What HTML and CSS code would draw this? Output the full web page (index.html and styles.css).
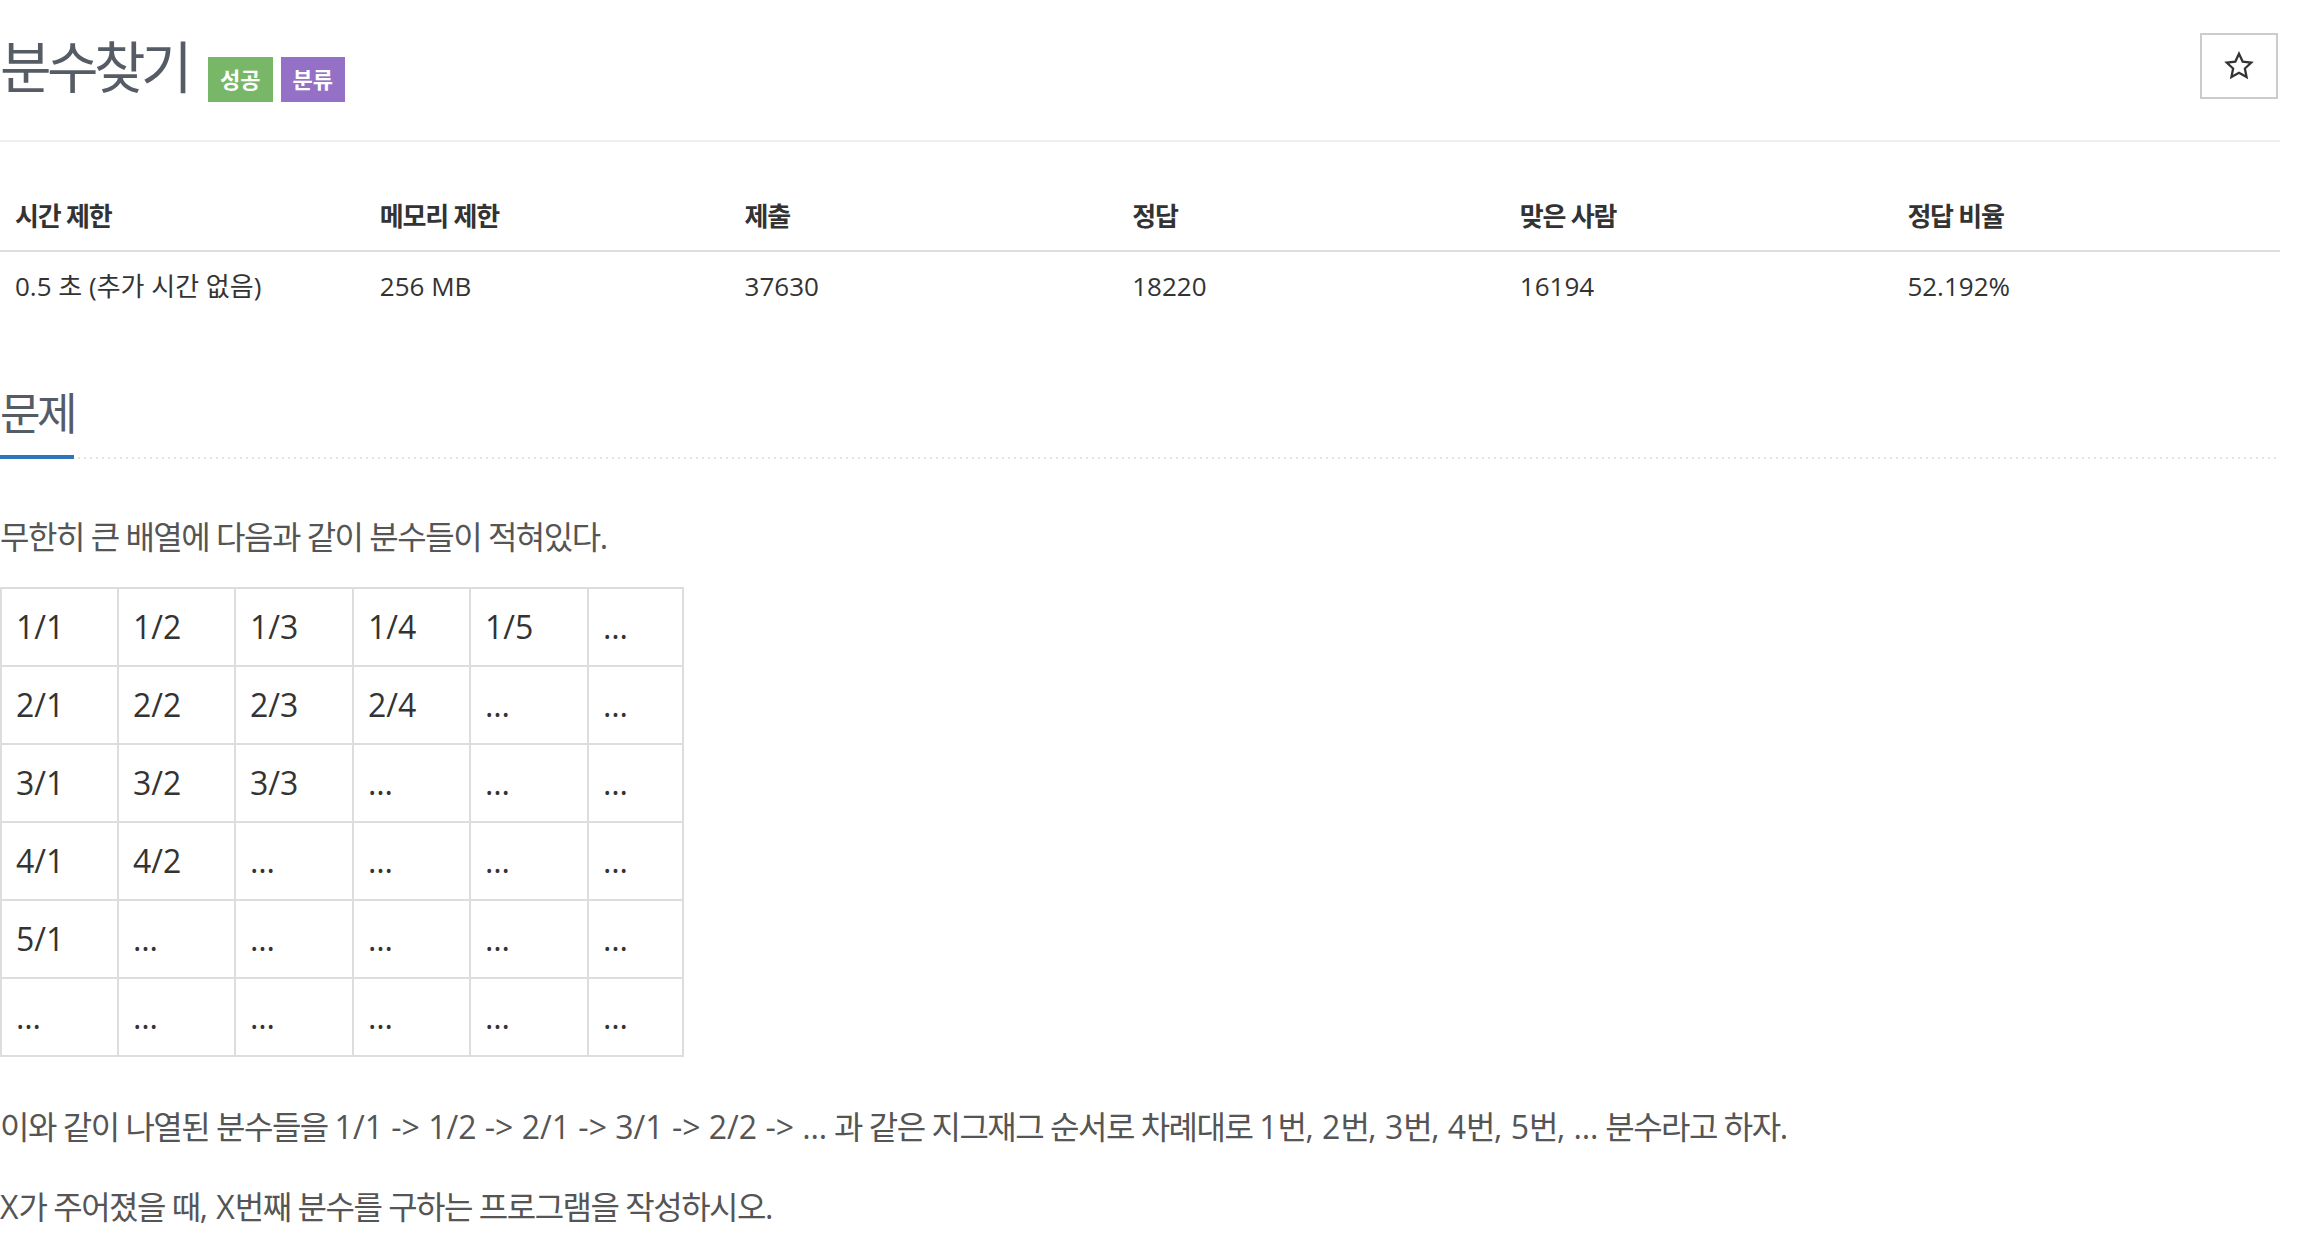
FILE: index.html
```html
<!DOCTYPE html>
<html lang="ko">
<head>
<meta charset="utf-8">
<title>분수찾기</title>
<link rel="stylesheet" href="styles.css">
</head>
<body>
<div class="container">
  <div class="page-header">
    <div class="title-group">
      <h1 class="title">분수찾기</h1>
      <span class="label label-success">성공</span>
      <span class="label label-purple">분류</span>
    </div>
    <button class="star-btn" type="button" aria-label="즐겨찾기">
      <svg width="32" height="32" viewBox="0 0 24 24"><path d="M12 2.8l2.75 5.9 6.45.75-4.8 4.45 1.28 6.4L12 17.1l-5.68 3.2 1.28-6.4-4.8-4.45 6.45-.75z" fill="none" stroke="#333" stroke-width="1.7" stroke-linejoin="miter"/></svg>
    </button>
  </div>

  <table class="info-table">
    <thead>
      <tr>
        <th class="c16">시간 제한</th>
        <th class="c16">메모리 제한</th>
        <th class="c17">제출</th>
        <th class="c17">정답</th>
        <th class="c17">맞은 사람</th>
        <th class="c17">정답 비율</th>
      </tr>
    </thead>
    <tbody>
      <tr>
        <td>0.5 초 (추가 시간 없음)</td>
        <td>256 MB</td>
        <td>37630</td>
        <td>18220</td>
        <td>16194</td>
        <td>52.192%</td>
      </tr>
    </tbody>
  </table>

  <section class="problem">
    <div class="headline">
      <h2 class="section-title">문제</h2>
    </div>
    <div class="problem-text">
      <p>무한히 큰 배열에 다음과 같이 분수들이 적혀있다.</p>
      <table class="frac-table">
        <colgroup>
          <col class="fc1"><col class="fc2"><col class="fc3"><col class="fc4"><col class="fc5"><col class="fc6">
        </colgroup>
        <tbody>
          <tr><td>1/1</td><td>1/2</td><td>1/3</td><td>1/4</td><td>1/5</td><td>…</td></tr>
          <tr><td>2/1</td><td>2/2</td><td>2/3</td><td>2/4</td><td>…</td><td>…</td></tr>
          <tr><td>3/1</td><td>3/2</td><td>3/3</td><td>…</td><td>…</td><td>…</td></tr>
          <tr><td>4/1</td><td>4/2</td><td>…</td><td>…</td><td>…</td><td>…</td></tr>
          <tr><td>5/1</td><td>…</td><td>…</td><td>…</td><td>…</td><td>…</td></tr>
          <tr><td>…</td><td>…</td><td>…</td><td>…</td><td>…</td><td>…</td></tr>
        </tbody>
      </table>
      <p class="p2">이와 같이 나열된 분수들을 <span class="en">1/1 -&gt; 1/2 -&gt; 2/1 -&gt; 3/1 -&gt; 2/2 -&gt; …</span> 과 같은 지그재그 순서로 차례대로 <span class="en">1</span>번<span class="en">, 2</span>번<span class="en">, 3</span>번<span class="en">, 4</span>번<span class="en">, 5</span>번<span class="en">, …</span> 분수라고 하자.</p>
      <p class="p3"><span class="en">X</span>가 주어졌을 때<span class="en">, X</span>번째 분수를 구하는 프로그램을 작성하시오.</p>
    </div>
  </section>
</div>
</body>
</html>
```

FILE: styles.css
```css
* { box-sizing: border-box; }

html, body {
  margin: 0;
  padding: 0;
  background: #fff;
}

body {
  font-family: "Open Sans", "Noto Sans CJK KR", sans-serif;
  color: #333;
}

.container {
  width: 2280px;
}

/* ---------- header ---------- */
.page-header {
  display: flex;
  justify-content: space-between;
  align-items: flex-start;
  padding: 33px 0 0;
  height: 142px;
  border-bottom: 2px solid #eee;
}

.title-group {
  display: flex;
  align-items: baseline;
  gap: 8px;
  margin-top: 3px;
}

.title {
  margin: 0 12px 0 0;
  font-size: 56px;
  line-height: 60px;
  font-weight: 400;
  letter-spacing: -4.5px;
  color: #565c65;
}

.label {
  display: inline-block;
  height: 45px;
  padding: 0 12px;
  font-size: 22px;
  line-height: 45px;
  font-weight: 700;
  color: #fff;
  letter-spacing: 0;
}

.label-success { background: #77b767; }
.label-purple { background: #9470c6; }

.star-btn {
  display: flex;
  align-items: center;
  justify-content: center;
  width: 78px;
  height: 66px;
  margin-right: 2px;
  padding: 0;
  border: 2px solid #ccc;
  background: #fff;
}

/* ---------- info table ---------- */
.info-table {
  width: 100%;
  margin-top: 38px;
  border-collapse: collapse;
  table-layout: fixed;
}

.info-table .c16 { width: 16%; }
.info-table .c17 { width: 17%; }

.info-table th {
  text-align: left;
  font-size: 26px;
  font-weight: 700;
  letter-spacing: -1.2px;
  line-height: 40px;
  padding: 16px 15px 14px;
  border-bottom: 2px solid #ddd;
  color: #333;
}

.info-table td {
  font-size: 26px;
  line-height: 40px;
  padding: 14px 15px;
  color: #333;
}

/* ---------- problem ---------- */
.problem {
  margin-top: 68px;
}

.headline {
  padding-bottom: 2px;
  background-image: linear-gradient(to right, #e2e4e8 2px, transparent 2px);
  background-size: 6px 2px;
  background-repeat: repeat-x;
  background-position: left bottom;
}

.section-title {
  display: inline-block;
  margin: 0 0 -2px 0;
  padding-bottom: 17px;
  font-size: 44px;
  line-height: 50px;
  font-weight: 400;
  letter-spacing: -3.5px;
  color: #565c65;
  border-bottom: 4px solid #2f75bb;
}

.problem-text {
  padding-top: 54px;
  color: #555;
}

.problem-text p {
  margin: 0;
  font-size: 32px;
  line-height: 48px;
  letter-spacing: -1.5px;
}

.problem-text .en {
  letter-spacing: 0;
}

.frac-table {
  margin-top: 26px;
  width: 682px;
  border-collapse: collapse;
  table-layout: fixed;
}

.fc1 { width: 117px; }
.fc2 { width: 117px; }
.fc3 { width: 118px; }
.fc4 { width: 117px; }
.fc5 { width: 118px; }
.fc6 { width: 95px; }

.frac-table td {
  border: 2px solid #ddd;
  padding: 16px 14px;
  font-size: 32px;
  line-height: 44px;
  color: #333;
}

.problem-text .p2 {
  margin-top: 46px;
}

.problem-text .p3 {
  margin-top: 32px;
}
```
